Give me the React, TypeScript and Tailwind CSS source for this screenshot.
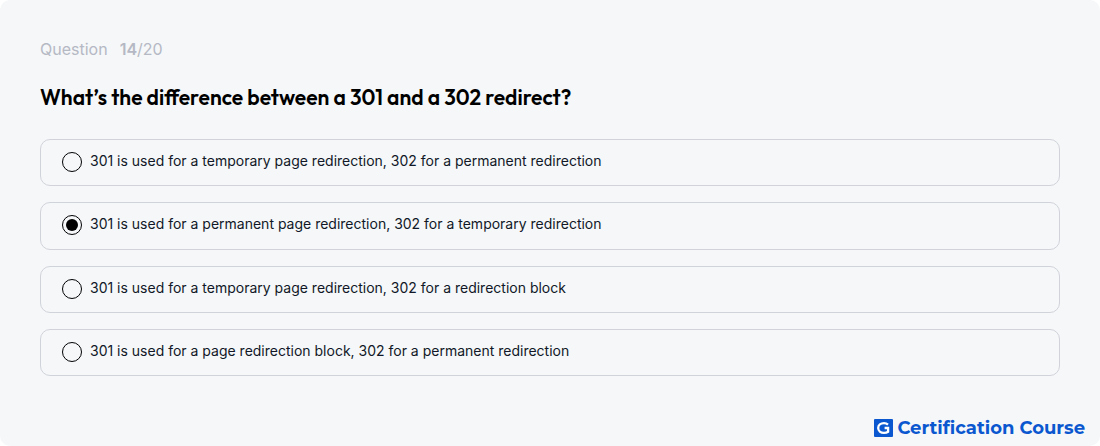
import { useState } from "react";

const question = {
  number: 14,
  total: 20,
  title: "What’s the difference between a 301 and a 302 redirect?",
  options: [
    "301 is used for a temporary page redirection, 302 for a permanent redirection",
    "301 is used for a permanent page redirection, 302 for a temporary redirection",
    "301 is used for a temporary page redirection, 302 for a redirection block",
    "301 is used for a page redirection block, 302 for a permanent redirection",
  ],
};

function Brand() {
  return (
    <div className="flex items-center gap-1 text-[#0b57d0]">
      <svg viewBox="0 0 19 18" className="h-[18px] w-[19px]" aria-hidden="true">
        <rect width="19" height="18" rx="1" fill="currentColor" />
        <path
          d="M14 5.6C12.9 4.6 11.6 4.1 10 4.1C6.7 4.1 4.2 6.2 4.2 9C4.2 11.8 6.7 13.9 10 13.9C11.5 13.9 13 13.5 14.1 12.7V9H10.6"
          fill="none"
          stroke="#fff"
          strokeWidth="2.3"
        />
      </svg>
      <span className="font-['Montserrat','Open_Sans',sans-serif] text-lg leading-6 font-bold">
        Certification Course
      </span>
    </div>
  );
}

export default function App() {
  const [selected, setSelected] = useState(1);

  return (
    <main className="flex min-h-screen flex-col rounded-[10px] bg-[#f5f7f9] font-['Inter',sans-serif]">
      <div className="px-10 pt-[37px]">
        <p className="flex gap-3 text-base leading-6 text-[#b5b9c4]">
          <span>Question</span>
          <span>
            <b className="font-semibold">{question.number}</b>/{question.total}
          </span>
        </p>

        <fieldset className="mt-5">
          <legend className="font-['Gilroy','Outfit','Lato',sans-serif] text-[21px] leading-8 font-semibold text-black">
            {question.title}
          </legend>

          <div className="mt-[26px] grid min-h-[237px] auto-rows-fr gap-4">
            {question.options.map((option, index) => (
              <label
                key={option}
                className="flex cursor-pointer items-start gap-2 rounded-[10px] border border-[#d0d3d9] px-[21px] py-3 text-sm leading-[18px] text-[#111827]"
              >
                <input
                  type="radio"
                  name="answer"
                  checked={selected === index}
                  onChange={() => setSelected(index)}
                  className="size-5 shrink-0 appearance-none rounded-full border border-black bg-clip-content p-[3px] checked:bg-black"
                />
                <span>{option}</span>
              </label>
            ))}
          </div>
        </fieldset>
      </div>

      <footer className="mt-auto flex justify-end pr-[15px] pb-1.5">
        <Brand />
      </footer>
    </main>
  );
}
